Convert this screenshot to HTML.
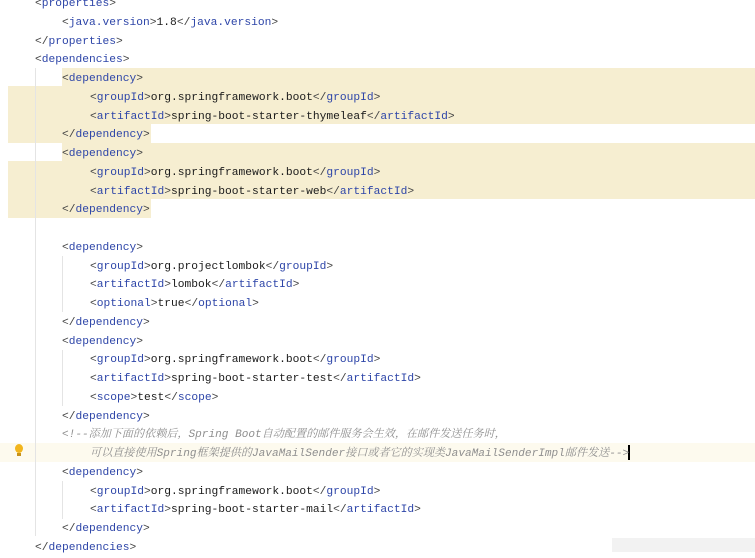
<!DOCTYPE html>
<html><head><meta charset="utf-8"><style>
body{margin:0;width:755px;height:558px;overflow:hidden;background:#fff;position:relative;font-family:"Liberation Mono",monospace;font-size:11.25px;}
.l{position:absolute;left:0;height:18.75px;line-height:18.75px;white-space:pre;color:#1a1a1a;margin-top:2.5px}
.t{color:#2d45a8}
.b{color:#444}
.c{color:#8f8f8f;font-style:italic;font-family:"Liberation Mono","Noto Serif CJK SC",monospace;font-size:11.1px}
.hl{position:absolute;background:#f6eed1}
.g{position:absolute;width:1px;background:#e4e4e4}
</style></head><body>
<div style="position:absolute;left:0;top:443px;width:755px;height:18.75px;background:#fdfaee"></div>
<div class="hl" style="left:62px;top:67.5px;width:693px;height:18.75px"></div>
<div class="hl" style="left:8px;top:86.25px;width:747px;height:37.5px"></div>
<div class="hl" style="left:8px;top:123.75px;width:143px;height:18.75px"></div>
<div class="hl" style="left:62px;top:142.5px;width:693px;height:18.75px"></div>
<div class="hl" style="left:8px;top:161.25px;width:747px;height:37.5px"></div>
<div class="hl" style="left:8px;top:198.75px;width:143px;height:18.75px"></div>
<div class="g" style="left:35px;top:68px;height:468px"></div>
<div class="g" style="left:62px;top:256px;height:56px"></div>
<div class="g" style="left:62px;top:350px;height:56px"></div>
<div class="g" style="left:62px;top:481px;height:38px"></div>
<div style="position:absolute;left:628px;top:445px;width:1.5px;height:15px;background:#000"></div>
<div style="position:absolute;left:15px;top:444px;width:8px;height:9px;border-radius:50%;background:#f2b51d"></div>
<div style="position:absolute;left:17px;top:453px;width:4px;height:3px;background:#c8921a"></div>
<div style="position:absolute;left:612px;top:538px;width:143px;height:14px;background:#f2f2f2"></div>
<div class="l" style="top:-7.4px;left:35px"><span class="b">&lt;</span><span class="t">properties</span><span class="b">&gt;</span></div>
<div class="l" style="top:11.35px;left:62px"><span class="b">&lt;</span><span class="t">java.version</span><span class="b">&gt;</span>1.8<span class="b">&lt;/</span><span class="t">java.version</span><span class="b">&gt;</span></div>
<div class="l" style="top:30.1px;left:35px"><span class="b">&lt;/</span><span class="t">properties</span><span class="b">&gt;</span></div>
<div class="l" style="top:48.85px;left:35px"><span class="b">&lt;</span><span class="t">dependencies</span><span class="b">&gt;</span></div>
<div class="l" style="top:67.6px;left:62px"><span class="b">&lt;</span><span class="t">dependency</span><span class="b">&gt;</span></div>
<div class="l" style="top:86.35px;left:90px"><span class="b">&lt;</span><span class="t">groupId</span><span class="b">&gt;</span>org.springframework.boot<span class="b">&lt;/</span><span class="t">groupId</span><span class="b">&gt;</span></div>
<div class="l" style="top:105.1px;left:90px"><span class="b">&lt;</span><span class="t">artifactId</span><span class="b">&gt;</span>spring-boot-starter-thymeleaf<span class="b">&lt;/</span><span class="t">artifactId</span><span class="b">&gt;</span></div>
<div class="l" style="top:123.85px;left:62px"><span class="b">&lt;/</span><span class="t">dependency</span><span class="b">&gt;</span></div>
<div class="l" style="top:142.6px;left:62px"><span class="b">&lt;</span><span class="t">dependency</span><span class="b">&gt;</span></div>
<div class="l" style="top:161.35px;left:90px"><span class="b">&lt;</span><span class="t">groupId</span><span class="b">&gt;</span>org.springframework.boot<span class="b">&lt;/</span><span class="t">groupId</span><span class="b">&gt;</span></div>
<div class="l" style="top:180.1px;left:90px"><span class="b">&lt;</span><span class="t">artifactId</span><span class="b">&gt;</span>spring-boot-starter-web<span class="b">&lt;/</span><span class="t">artifactId</span><span class="b">&gt;</span></div>
<div class="l" style="top:198.85px;left:62px"><span class="b">&lt;/</span><span class="t">dependency</span><span class="b">&gt;</span></div>
<div class="l" style="top:236.35px;left:62px"><span class="b">&lt;</span><span class="t">dependency</span><span class="b">&gt;</span></div>
<div class="l" style="top:255.1px;left:90px"><span class="b">&lt;</span><span class="t">groupId</span><span class="b">&gt;</span>org.projectlombok<span class="b">&lt;/</span><span class="t">groupId</span><span class="b">&gt;</span></div>
<div class="l" style="top:273.85px;left:90px"><span class="b">&lt;</span><span class="t">artifactId</span><span class="b">&gt;</span>lombok<span class="b">&lt;/</span><span class="t">artifactId</span><span class="b">&gt;</span></div>
<div class="l" style="top:292.6px;left:90px"><span class="b">&lt;</span><span class="t">optional</span><span class="b">&gt;</span>true<span class="b">&lt;/</span><span class="t">optional</span><span class="b">&gt;</span></div>
<div class="l" style="top:311.35px;left:62px"><span class="b">&lt;/</span><span class="t">dependency</span><span class="b">&gt;</span></div>
<div class="l" style="top:330.1px;left:62px"><span class="b">&lt;</span><span class="t">dependency</span><span class="b">&gt;</span></div>
<div class="l" style="top:348.85px;left:90px"><span class="b">&lt;</span><span class="t">groupId</span><span class="b">&gt;</span>org.springframework.boot<span class="b">&lt;/</span><span class="t">groupId</span><span class="b">&gt;</span></div>
<div class="l" style="top:367.6px;left:90px"><span class="b">&lt;</span><span class="t">artifactId</span><span class="b">&gt;</span>spring-boot-starter-test<span class="b">&lt;/</span><span class="t">artifactId</span><span class="b">&gt;</span></div>
<div class="l" style="top:386.35px;left:90px"><span class="b">&lt;</span><span class="t">scope</span><span class="b">&gt;</span>test<span class="b">&lt;/</span><span class="t">scope</span><span class="b">&gt;</span></div>
<div class="l" style="top:405.1px;left:62px"><span class="b">&lt;/</span><span class="t">dependency</span><span class="b">&gt;</span></div>
<div class="l c" style="top:423.85px;left:62px">&lt;!--添加下面的依赖后，Spring Boot自动配置的邮件服务会生效，在邮件发送任务时，</div>
<div class="l c" style="top:442.6px;left:90px">可以直接使用Spring框架提供的JavaMailSender接口或者它的实现类JavaMailSenderImpl邮件发送--&gt;</div>
<div class="l" style="top:461.35px;left:62px"><span class="b">&lt;</span><span class="t">dependency</span><span class="b">&gt;</span></div>
<div class="l" style="top:480.1px;left:90px"><span class="b">&lt;</span><span class="t">groupId</span><span class="b">&gt;</span>org.springframework.boot<span class="b">&lt;/</span><span class="t">groupId</span><span class="b">&gt;</span></div>
<div class="l" style="top:498.85px;left:90px"><span class="b">&lt;</span><span class="t">artifactId</span><span class="b">&gt;</span>spring-boot-starter-mail<span class="b">&lt;/</span><span class="t">artifactId</span><span class="b">&gt;</span></div>
<div class="l" style="top:517.6px;left:62px"><span class="b">&lt;/</span><span class="t">dependency</span><span class="b">&gt;</span></div>
<div class="l" style="top:536.35px;left:35px"><span class="b">&lt;/</span><span class="t">dependencies</span><span class="b">&gt;</span></div>
</body></html>
